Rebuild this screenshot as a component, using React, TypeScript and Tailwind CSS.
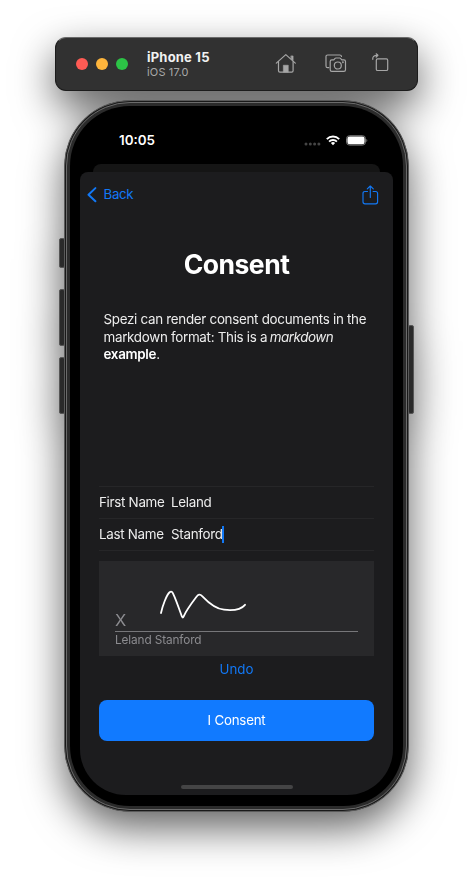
import React from "react";

function HomeIcon() {
  return (
    <svg width="22" height="21" viewBox="0 0 22 21" fill="none" stroke="#a6a6a6" strokeWidth="1.2" strokeLinecap="round" strokeLinejoin="round">
      <path d="M1.3 10.1 10.8 1.6l9.5 8.5" />
      <path d="M3.5 8.6v9.2c0 .9.5 1.4 1.4 1.4h11.8c.9 0 1.4-.5 1.4-1.4V8.6" />
      <path d="M16.2 2.9h1.9v4.6l-1.9-1.7z" fill="#a6a6a6" strokeWidth=".6" />
      <path d="M8.3 19v-6.8h5V19z" fill="#a6a6a6" strokeWidth=".5" />
    </svg>
  );
}

function CameraIcon() {
  return (
    <svg width="22" height="19" viewBox="0 0 22 19" fill="none" stroke="#a6a6a6" strokeWidth="1.2" strokeLinecap="round" strokeLinejoin="round">
      <path d="M3.8 13.6H2.6C1.5 13.6 1 13 1 12V2.7C1 1.6 1.6 1 2.7 1h12.1c1 0 1.6.5 1.7 1.5" />
      <path d="M6.8 5.8h2l1.3-1.5c.2-.2.4-.3.7-.3h4c.3 0 .5.1.7.3l1.3 1.5h2.1c1 0 1.6.6 1.6 1.6v8.4c0 1-.6 1.6-1.6 1.6H6.8c-1 0-1.6-.6-1.6-1.6V7.4c0-1 .6-1.6 1.6-1.6Z" />
      <circle cx="12.8" cy="11.5" r="3.5" />
      <circle cx="17.9" cy="8.2" r=".35" fill="#a6a6a6" />
    </svg>
  );
}

function RotateIcon() {
  return (
    <svg width="17" height="20" viewBox="0 0 17 20" fill="none" stroke="#a6a6a6" strokeWidth="1.2" strokeLinecap="round" strokeLinejoin="round">
      <rect x="4.3" y="5.9" width="11.4" height="11.6" rx="1.3" />
      <path d="M.8 6.3C.5 3.9 1.8 2.4 5.3 2.3" />
      <path d="M4.2.8 5.9 2.3 4.2 4" />
    </svg>
  );
}

function Toolbar() {
  return (
    <div className="flex h-[54px] w-[363px] shrink-0 items-center rounded-[11px] border border-[#1c1c1c] border-t-[#6a6a6a] bg-[#313131] pl-5">
      <div className="flex gap-2">
        <span className="size-3 rounded-full bg-[#ff5b54]" />
        <span className="size-3 rounded-full bg-[#feb53c]" />
        <span className="size-3 rounded-full bg-[#2cc346]" />
      </div>
      <div className="ml-[19px] w-[128px]">
        <div className="text-[13px] leading-[15px] font-bold tracking-[0.2px] text-[#f2f2f2]">iPhone 15</div>
        <div className="text-[11px] leading-[14px] tracking-[0.15px] text-[#a9a9a9]">iOS 17.0</div>
      </div>
      <div className="flex items-center pb-[2px]">
        <HomeIcon />
        <span className="ml-[28px]"><CameraIcon /></span>
        <span className="ml-[25px]"><RotateIcon /></span>
      </div>
    </div>
  );
}

function StatusBar() {
  return (
    <div className="flex h-[58px] items-center justify-between pt-[11px] pr-[25px] pl-[39px]">
      <span className="text-[13.4px] font-semibold text-white">10:05</span>
      <div className="flex items-center">
        <svg width="17" height="4" viewBox="0 0 17 4" fill="#454545" className="mt-[6px]">
          <circle cx="2" cy="2" r="1.5" />
          <circle cx="6.3" cy="2" r="1.5" />
          <circle cx="10.6" cy="2" r="1.5" />
          <circle cx="14.9" cy="2" r="1.5" />
        </svg>
        <svg width="14" height="11" viewBox="0 0 14 11" fill="none" stroke="#fff" strokeWidth="1.9" className="ml-[5px]">
          <path d="M.8 4.1a8.8 8.8 0 0 1 12.4 0" />
          <path d="M3.1 6.6a5.5 5.5 0 0 1 7.8 0" />
          <path d="M7 10.2 4.9 8.1a3 3 0 0 1 4.2 0z" fill="#fff" stroke="none" />
        </svg>
        <svg width="22" height="11" viewBox="0 0 22 11" className="ml-[6px]">
          <rect x=".5" y=".7" width="19" height="9.4" rx="3" fill="none" stroke="#777" />
          <rect x="1.4" y="1.6" width="17.2" height="7.6" rx="2.2" fill="#fff" />
          <path d="M20.4 3.9c1.2.4 1.2 2.5 0 3z" fill="#777" />
        </svg>
      </div>
    </div>
  );
}

function Field({ label, value, active }: { label: string; value: string; active?: boolean }) {
  return (
    <div className="flex h-8 items-center border-t border-[#262628] text-[13.4px] tracking-[-0.3px] text-[#ededed]">
      <span className={active ? "w-[72px]" : "w-[72px] pb-px"}>{label}</span>
      <span className={active ? "" : "pb-px"}>{value}</span>
      {active && <span className="-ml-px h-[17px] w-[2px] bg-[#1278f5]" />}
    </div>
  );
}

function Signature() {
  return (
    <div className="mt-[10px] flex h-[95px] flex-col bg-[#28282a] px-4 text-[#8c8c90]">
      <div className="relative flex h-[71px] items-end border-b border-[#77777a]">
        <span className="text-[16.5px] leading-[22px]">X</span>
        <svg width="90" height="34" viewBox="0 0 90 34" fill="none" stroke="#fff" strokeWidth="1.8" strokeLinecap="round" strokeLinejoin="round" className="absolute top-[27px] left-[43.5px]">
          <path d="M2 25C3.5 18 7.5 7 10.6 4.3C12.2 3 13.2 3.7 14.2 5.8C17.2 12 20.7 22.5 22.8 28.3C23.4 29.9 24 30 24.7 28.3C27.2 22.5 33.5 14 37.3 9C39.3 6.3 40.8 5.6 43.4 8.3C50.2 15.5 57.3 20.8 65 21.7C74 22.7 81.5 22.2 86 16.8" />
        </svg>
      </div>
      <span className="pt-px text-[11.8px] leading-[15px] tracking-[-0.12px]">Leland Stanford</span>
    </div>
  );
}

function Sheet() {
  return (
    <div className="flex h-[623px] flex-col rounded-t-[8px] rounded-b-[46px] bg-[#1c1c1e]">
      <div className="flex h-[45px] items-center justify-between pr-[14px] pl-[7px] text-[#1278f5]">
        <div className="flex items-center gap-[6.5px]">
          <svg width="10" height="16" viewBox="0 0 10 16" fill="none" stroke="currentColor" strokeWidth="2" strokeLinecap="round" strokeLinejoin="round">
            <path d="M8.4 1.1 1.5 7.7l6.9 6.6" />
          </svg>
          <span className="text-[13.3px] tracking-[-0.3px]">Back</span>
        </div>
        <svg width="17" height="20" viewBox="0 0 17 20" fill="none" stroke="currentColor" strokeWidth="1.15" strokeLinecap="round" strokeLinejoin="round">
          <path d="M5.5 6.500H3C1.700 6.500 1 7.200 1 8.500v8.300c0 1.300.7 2 2 2h10.600c1.300 0 2-.7 2-2V8.500c0-1.300-.7-2-2-2h-2.500" />
          <path d="M8.300 12.500V1M5.300 3.900 8.300 1l3 2.900" />
        </svg>
      </div>
      <h1 className="mt-[29px] text-center text-[26.5px] leading-9 font-bold tracking-[-0.5px] text-white">Consent</h1>
      <p className="mt-[29px] pl-[23.5px] text-[13.4px] leading-[17.5px] tracking-[-0.3px] text-[#ededed]">
        Spezi can render consent documents in the
        <br />
        markdown format: This is a <em className="-ml-px tracking-[-0.45px]">markdown</em>
        <br />
        <strong className="font-semibold text-white">example</strong>.
      </p>
      <form className="mt-auto flex flex-col px-[19px] pb-[6px]">
        <Field label="First Name" value="Leland" />
        <Field label="Last Name" value="Stanford" active />
        <div className="border-t border-[#262628]" />
        <Signature />
        <button type="button" className="mt-[4px] h-[20px] text-[13.3px] text-[#1278f5]">Undo</button>
        <button type="button" className="mt-[20px] h-[41px] rounded-[8px] bg-[#117aff] text-[13.3px] tracking-[-0.2px] text-white">I Consent</button>
        <div className="mx-auto mt-[44px] h-[4px] w-[112px] rounded-full bg-[#444445]" />
      </form>
    </div>
  );
}

function SideButton({ place }: { place: string }) {
  return <span className={"absolute w-[6px] rounded-[2px] border border-[#565656] bg-[#2a2a2a] " + place} />;
}

export default function App() {
  return (
    <div className="flex h-[886px] w-[473px] justify-center overflow-hidden bg-white pt-[37px] font-['Inter','Liberation_Sans',sans-serif]">
      <div className="flex flex-col items-center drop-shadow-[0_16px_20px_rgba(0,0,0,0.62)]">
        <Toolbar />
        <div className="relative mt-[9px]">
          <SideButton place="-left-[5px] top-[138px] h-[30px]" />
          <SideButton place="-left-[5px] top-[189px] h-[57px]" />
          <SideButton place="-left-[5px] top-[257px] h-[57px]" />
          <SideButton place="-right-[5px] top-[225px] h-[89px]" />
          <div className="relative h-[712px] w-[345px] rounded-[66px] border border-[#5a5a5a] bg-[#191919] p-px">
            <div className="h-full rounded-[64px] border border-[#6b6b6b] bg-[#2b2b2b] p-[3px]">
              <div className="h-full rounded-[60px] bg-black px-[10px]">
                <StatusBar />
                <div className="mx-[13px] h-2 rounded-t-[8px] bg-[#151515]" />
                <Sheet />
              </div>
            </div>
          </div>
        </div>
      </div>
    </div>
  );
}
